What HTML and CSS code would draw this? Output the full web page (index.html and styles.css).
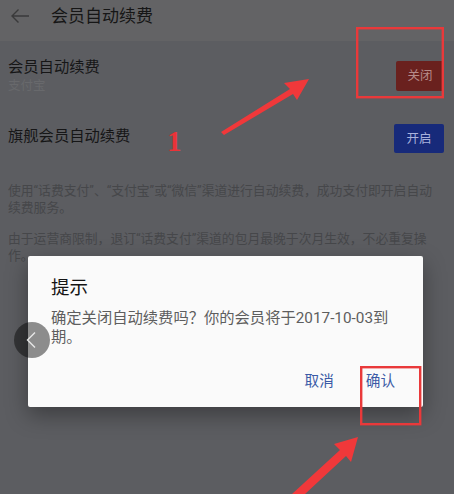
FILE: index.html
```html
<!DOCTYPE html>
<html>
	<head>
		<meta charset="UTF-8">
		<title>会员自动续费</title>
		<link rel="stylesheet" href="styles.css">
	</head>
	<body>
		<div id="box">
			<!--head-->
			<div class="topbar">
				<svg class="back" width="20" height="16" viewBox="0 0 20 16">
					<path d="M19 8H2M8.5 1.5L2 8l6.5 6.5" fill="none" stroke="#3a3a3b" stroke-width="1.4"/>
				</svg>
				<div class="title">会员自动续费</div>
			</div>
			<!--list-->
			<div class="row first">
				<div class="info">
					<div class="name">会员自动续费</div>
					<div class="sub">支付宝</div>
				</div>
				<div class="btn off">关闭</div>
			</div>
			<div class="row second">
				<div class="info">
					<div class="name">旗舰会员自动续费</div>
				</div>
				<div class="btn on">开启</div>
			</div>
			<!--notes-->
			<div class="notes">
				<p>使用“话费支付”、“支付宝”或“微信”渠道进行自动续费，成功支付即开启自动<br/>续费服务。</p>
				<p>由于运营商限制，退订“话费支付”渠道的包月最晚于次月生效，不必重复操<br/>作。</p>
			</div>

			<!--dialog-->
			<div class="dialog">
				<div class="dlg-title">提示</div>
				<div class="dlg-msg">确定关闭自动续费吗？你的会员将于2017-10-03到期。</div>
				<div class="dlg-foot">
					<div class="dlg-btn">取消</div>
					<div class="dlg-btn">确认</div>
				</div>
			</div>

			<!--浮动返回-->
			<div class="float-back">
				<svg width="36" height="36" viewBox="0 0 36 36">
					<path d="M21 10.5L13.5 18 21 25.5" fill="none" stroke="#e6e6e6" stroke-width="1.4"/>
				</svg>
			</div>

			<!--标注-->
			<svg class="marks" width="454" height="494" viewBox="0 0 454 494">
				<rect x="357.2" y="28.2" width="85.6" height="69" fill="none" stroke="#e9393a" stroke-width="2.4"/>
				<rect x="361.2" y="367.2" width="59" height="57" fill="none" stroke="#e9393a" stroke-width="2.4"/>
				<polygon points="309,79 284,83 290,89 221,132 224,135 293,94 297,100" fill="#f0383a"/>
				<polygon points="358,437 334,444 340,450 292,494 305,494 346,456 351,462" fill="#f0383a"/>
			</svg>
			<span class="num">1</span>
		</div>
	</body>
</html>
```

FILE: styles.css
```css
body,div,p{
	margin: 0px;
	padding: 0px;
}
body{
	background-color: #5c5d61;
	font-family: Roboto, "Noto Sans CJK SC", sans-serif;
}
#box{
	width: 454px;
	height: 494px;
	position: relative;
	overflow: hidden;
}
/*head start*/
#box .topbar{
	height: 41px;
	padding: 0 0 10px 10px;
	box-sizing: border-box;
	background-color: #636365;
	display: flex;
	align-items: center;
}
#box .topbar .title{
	margin-left: 21px;
	font-size: 17px;
	line-height: 22px;
	color: #161616;
}
/*head end*/

/*list start*/
#box .row{
	padding: 0 10px 0 8px;
	display: flex;
	align-items: center;
	justify-content: space-between;
}
#box .first{
	height: 69px;
}
#box .second{
	height: 56px;
}
#box .row .name{
	font-size: 15.3px;
	line-height: 20px;
	color: #161617;
}
#box .second .name{
	margin-top: -4px;
}
#box .row .sub{
	font-size: 12.5px;
	line-height: 17px;
	color: #68696c;
}
#box .btn{
	width: 48px;
	height: 30px;
	font-size: 12.5px;
	line-height: 30px;
	text-align: center;
	border-radius: 2px;
}
#box .off{
	background-color: #6a211e;
	color: #b68b89;
}
#box .on{
	width: 50px;
	height: 29px;
	line-height: 29px;
	background-color: #172a7a;
	color: #a9b2dc;
}
/*list end*/

/*notes start*/
#box .notes{
	padding: 17px 8px 0;
}
#box .notes p{
	margin-bottom: 15px;
	font-size: 12.8px;
	line-height: 16.5px;
	color: #46474a;
}
/*notes end*/

/*dialog start*/
#box .dialog{
	position: absolute;
	left: 28px;
	top: 256px;
	width: 395px;
	height: 151px;
	padding: 20px 14px 0 23px;
	box-sizing: border-box;
	background-color: #fafafa;
	border-radius: 2px;
	box-shadow: 0 8px 22px rgba(0, 0, 0, 0.35);
}
#box .dlg-title{
	font-size: 18.5px;
	line-height: 24px;
	color: #141414;
}
#box .dlg-msg{
	margin: 9px 9px 0 0;
	font-size: 15.3px;
	line-height: 19px;
	color: #5e5e5e;
}
#box .dlg-foot{
	margin-top: 16px;
	display: flex;
	justify-content: flex-end;
	gap: 4px;
}
#box .dlg-btn{
	padding: 0 14px;
	font-size: 14.6px;
	line-height: 36px;
	color: #3a5aa6;
}
/*dialog end*/

#box .float-back{
	position: absolute;
	left: 14px;
	top: 322px;
	width: 36px;
	height: 36px;
	border-radius: 50%;
	background-color: rgba(0, 0, 0, 0.44);
}
#box .float-back svg{
	display: block;
}
#box .marks{
	position: absolute;
	left: 0;
	top: 0;
	pointer-events: none;
}
#box .num{
	position: absolute;
	left: 167px;
	top: 126px;
	font-family: "Liberation Serif", serif;
	font-size: 29px;
	font-weight: bold;
	line-height: 30px;
	color: #ea3338;
}
```
